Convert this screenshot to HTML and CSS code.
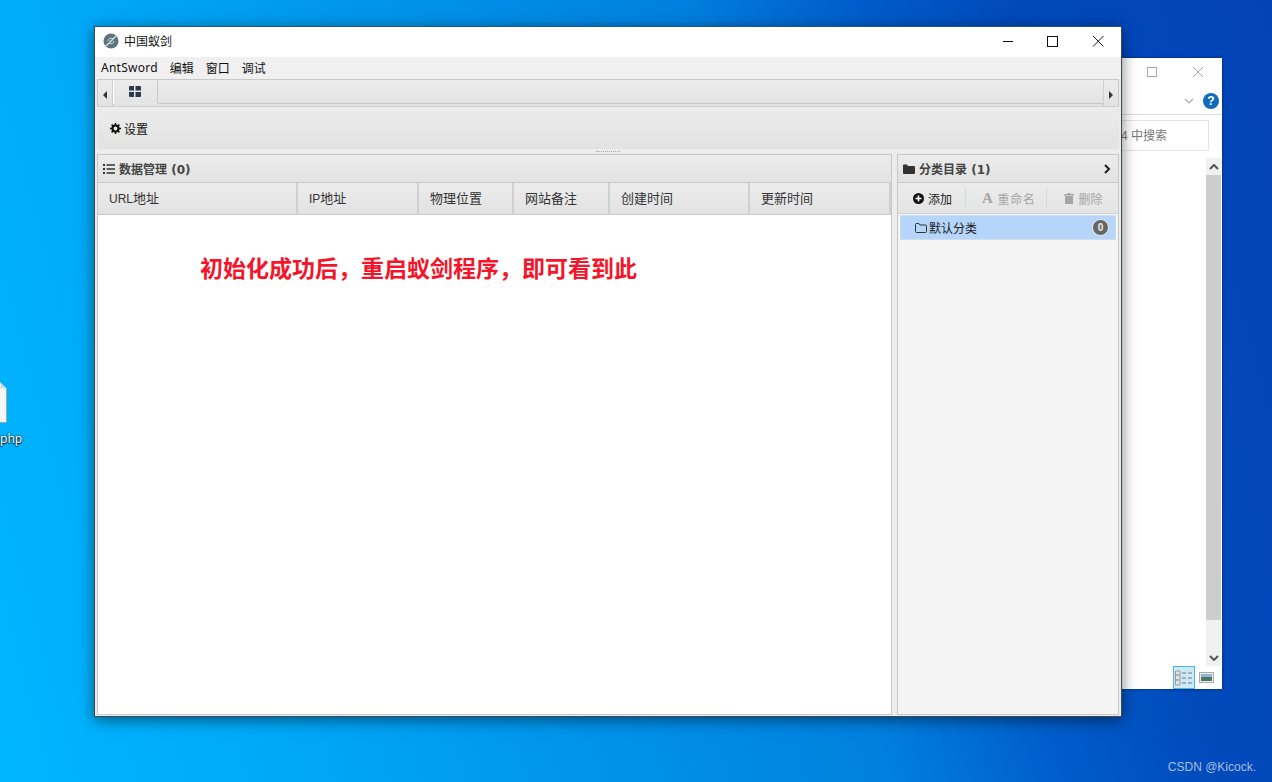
FILE: index.html
```html
<!DOCTYPE html>
<html lang="zh-CN">
<head>
    <meta charset="UTF-8">
    <title>中国蚁剑</title>
    <link rel="stylesheet" href="styles.css">
</head>
<body>
    <div class="desktop">
        <div class="file-icon">
            <svg width="8" height="42" viewBox="0 0 8 42">
                <path d="M-10 .5H.5L6.500 6.500V40.500H-10Z" fill="#f6f6f7" stroke="#9aa6ae"/>
                <path d="M.5 .5V6.500H6.500Z" fill="#d5dadd"/>
            </svg>
        </div>
        <div class="file-name">php</div>

        <!-- window behind -->
        <div class="back-window">
            <div class="back-title">
                <svg width="12" height="12" viewBox="0 0 12 12"><rect x="1.500" y="1.500" width="9" height="9" fill="none" stroke="#a8a8a8"/></svg>
                <svg width="12" height="12" viewBox="0 0 12 12"><path d="M1 1L11 11M11 1L1 11" stroke="#a8a8a8"/></svg>
            </div>
            <div class="back-ribbon">
                <svg width="10" height="6" viewBox="0 0 10 6"><path d="M1 1L5 5L9 1" fill="none" stroke="#a8a8a8" stroke-width="1.200"/></svg>
                <span class="help">?</span>
            </div>
            <div class="back-search-row">
                <div class="back-search">4 中搜索</div>
            </div>
            <div class="back-body">
                <div class="back-content"></div>
                <div class="back-scroll">
                    <div class="scroll-btn">
                        <svg width="10" height="6" viewBox="0 0 10 6"><path d="M1 5L5 1L9 5" fill="none" stroke="#555" stroke-width="2"/></svg>
                    </div>
                    <div class="scroll-thumb"></div>
                    <div class="scroll-btn">
                        <svg width="10" height="6" viewBox="0 0 10 6"><path d="M1 1L5 5L9 1" fill="none" stroke="#555" stroke-width="2"/></svg>
                    </div>
                </div>
            </div>
            <div class="back-status">
                <span class="view-btn active">
                    <svg width="18" height="16" viewBox="0 0 18 16"><path d="M.5 1H5V15H.5Z" fill="#e4e4e4" stroke="#999"/><path d="M1 5H4M1 10H4M7 3H11M13 3H17M7 8H11M13 8H17M7 13H11M13 13H17" stroke="#777"/></svg>
                </span>
                <span class="view-btn">
                    <svg width="15" height="11" viewBox="0 0 15 11"><rect x=".5" y=".5" width="14" height="10" fill="#eee" stroke="#aaa"/><rect x="2" y="2" width="11" height="3" fill="#8fb7d6"/><rect x="2" y="5" width="11" height="4" fill="#4d7466"/></svg>
                </span>
            </div>
        </div>

        <!-- main window -->
        <div class="window">
            <div class="titlebar">
                <div class="app-title">
                    <svg class="app-logo" width="16" height="16" viewBox="0 0 16 16">
                        <circle cx="8" cy="8" r="7.500" fill="#5d7480"/>
                        <path d="M3 13L13 3" stroke="#d5dde0" stroke-width="1.400"/>
                        <path d="M5 8a3 3 0 0 1 5-2M11 8a3 3 0 0 1-5 2" fill="none" stroke="#d5dde0"/>
                    </svg>
                    <span>中国蚁剑</span>
                </div>
                <div class="win-controls">
                    <span class="win-btn"><svg width="12" height="12" viewBox="0 0 12 12"><path d="M1 6.500H11" stroke="#111"/></svg></span>
                    <span class="win-btn"><svg width="12" height="12" viewBox="0 0 12 12"><rect x="1.500" y="1.500" width="10" height="10" fill="none" stroke="#111"/></svg></span>
                    <span class="win-btn"><svg width="12" height="12" viewBox="0 0 12 12"><path d="M1 1L11.500 11.500M11.500 1L1 11.500" stroke="#111"/></svg></span>
                </div>
            </div>

            <div class="menubar">
                <span>AntSword</span>
                <span>编辑</span>
                <span>窗口</span>
                <span>调试</span>
            </div>

            <div class="content">
                <div class="tabbar">
                    <div class="tab-arrow">
                        <svg width="4" height="8" viewBox="0 0 4 8"><path d="M4 0V8L0 4Z" fill="#333"/></svg>
                    </div>
                    <div class="tab-active">
                        <svg width="12" height="11" viewBox="0 0 12 11"><path d="M0 1Q0 0 1 0H5V4.500H0ZM6.500 0H11Q12 0 12 1V4.500H6.500ZM0 6H5V11H1Q0 11 0 10ZM6.500 6H12V10Q12 11 11 11H6.500Z" fill="#2b3a4a"/></svg>
                    </div>
                    <div class="tab-rest"></div>
                    <div class="tab-arrow right">
                        <svg width="4" height="8" viewBox="0 0 4 8"><path d="M0 0V8L4 4Z" fill="#333"/></svg>
                    </div>
                </div>

                <div class="toolbar">
                    <span class="tool-item">
                        <svg width="11" height="11" viewBox="0 0 11 11"><circle cx="5.500" cy="5.500" r="3" fill="none" stroke="#111" stroke-width="2.200"/><path d="M5.500 0V2M5.500 9V11M0 5.500H2M9 5.500H11M1.600 1.600L3 3M8 8L9.400 9.400M9.400 1.600L8 3M3 8L1.600 9.400" stroke="#111" stroke-width="1.600"/></svg>
                        设置
                    </span>
                </div>

                <div class="splitter"><i></i></div>

                <div class="panels">
                    <section class="panel panel-left">
                        <header class="panel-head">
                            <svg width="12" height="10" viewBox="0 0 12 10"><path d="M0 0H2V2H0ZM0 4H2V6H0ZM0 8H2V10H0ZM3.500 .3H12V1.700H3.500ZM3.500 4.300H12V5.700H3.500ZM3.500 8.300H12V9.700H3.500Z" fill="#333"/></svg>
                            <span>数据管理 (0)</span>
                        </header>
                        <div class="grid-head">
                            <div class="col col-url"><span class="latin">URL</span>地址</div>
                            <div class="col col-ip"><span class="latin">IP</span>地址</div>
                            <div class="col col-loc">物理位置</div>
                            <div class="col col-note">网站备注</div>
                            <div class="col col-created">创建时间</div>
                            <div class="col col-updated">更新时间</div>
                        </div>
                        <div class="grid-body">
                            <p class="notice">初始化成功后，重启蚁剑程序，即可看到此</p>
                        </div>
                    </section>

                    <section class="panel panel-right">
                        <header class="panel-head">
                            <svg width="12" height="10" viewBox="0 0 12 10"><path d="M0 1.500Q0 .5 1 .5H4L5 2H11Q12 2 12 3V9Q12 10 11 10H1Q0 10 0 9Z" fill="#333"/></svg>
                            <span>分类目录 (1)</span>
                            <svg class="collapse" width="7" height="10" viewBox="0 0 7 10"><path d="M1 1L5 5L1 9" fill="none" stroke="#222" stroke-width="2"/></svg>
                        </header>
                        <div class="cat-tools">
                            <span class="cat-btn">
                                <svg width="11" height="11" viewBox="0 0 11 11"><circle cx="5.500" cy="5.500" r="5.500" fill="#111"/><path d="M5.500 2.500V8.500M2.500 5.500H8.500" stroke="#fff" stroke-width="1.600"/></svg>
                                添加
                            </span>
                            <span class="cat-btn off rename">
                                <span class="glyph-a">A</span>
                                重命名
                            </span>
                            <span class="cat-btn off del">
                                <svg width="10" height="11" viewBox="0 0 10 11"><path d="M3.500 0H6.500V1H10V2.500H0V1H3.500ZM1 3H9V11H1Z" fill="#a5a5a5"/></svg>
                                删除
                            </span>
                        </div>
                        <div class="cat-list">
                            <div class="cat-row">
                                <svg width="12" height="10" viewBox="0 0 12 10"><path d="M.5 1.500Q.5 .5 1.500 .5H4L5 2H10.500Q11.500 2 11.500 3V8.500Q11.500 9.500 10.500 9.500H1.500Q.5 9.500 .5 8.500Z" fill="none" stroke="#333"/></svg>
                                <span>默认分类</span>
                                <b class="badge">0</b>
                            </div>
                        </div>
                    </section>
                </div>
            </div>
        </div>

        <div class="watermark">CSDN @Kicock.</div>
    </div>
</body>
</html>
```

FILE: styles.css
```css
* {
    box-sizing: border-box;
}

html, body {
    margin: 0;
    height: 100%;
    overflow: hidden;
}

body {
    font-family: "Liberation Sans", "Noto Sans CJK SC", sans-serif;
    font-size: 12px;
    color: #222;
}

.desktop {
    position: relative;
    width: 1272px;
    height: 782px;
    overflow: hidden;
    background: linear-gradient(75deg, #00b6ff 0%, #00a8f8 20%, #0094ea 40%, #0080e0 60%, #005cca 72%, #004abc 82%, #0542b8 100%);
}

.file-icon {
    position: absolute;
    left: 0;
    top: 382px;
    line-height: 0;
}

.file-name {
    position: absolute;
    left: 0;
    top: 430px;
    font-family: "Noto Sans", sans-serif;
    font-size: 12px;
    color: #fff;
    text-shadow: 0 1px 1px #000, 0 0 2px #000;
}

.watermark {
    position: absolute;
    right: 16px;
    top: 760px;
    font-size: 12px;
    color: #a9bddc;
}

/* back window */
.back-window {
    position: absolute;
    left: 1100px;
    top: 58px;
    width: 122px;
    height: 631px;
    display: flex;
    flex-direction: column;
    background: #fff;
    box-shadow: 0 0 3px rgba(0, 0, 0, 0.5);
}

.back-title {
    height: 28px;
    display: flex;
    align-items: center;
    justify-content: flex-end;
    gap: 34px;
    padding: 0 18px 0 0;
    flex: none;
}

.back-ribbon {
    height: 29px;
    display: flex;
    align-items: center;
    justify-content: flex-end;
    gap: 9px;
    padding: 1px 3px 0 0;
    border-bottom: 1px solid #dcdcdc;
    flex: none;
}

.help {
    width: 16px;
    height: 16px;
    border-radius: 50%;
    background: #0f6cbd;
    color: #fff;
    font-weight: bold;
    font-size: 12px;
    line-height: 16px;
    text-align: center;
}

.back-search-row {
    height: 36px;
    padding: 5px 13px 0 17px;
    flex: none;
}

.back-search {
    height: 31px;
    border: 1px solid #e3e3e3;
    padding-left: 3px;
    line-height: 30px;
    color: #777;
    font-size: 12px;
}

.back-body {
    flex: 1;
    display: flex;
    padding-top: 7px;
    min-height: 0;
}

.back-content {
    flex: 1;
}

.back-scroll {
    width: 15px;
    margin-right: 1px;
    display: flex;
    flex-direction: column;
    background: #f0f0f0;
}

.scroll-btn {
    height: 17px;
    display: flex;
    align-items: center;
    justify-content: center;
    flex: none;
}

.scroll-thumb {
    height: 445px;
    background: #cdcdcd;
}

.back-scroll .scroll-btn:last-child {
    margin-top: auto;
}

.back-status {
    height: 23px;
    flex: none;
    display: flex;
    justify-content: flex-end;
    align-items: center;
    gap: 3px;
    padding-right: 8px;
}

.view-btn {
    width: 22px;
    height: 23px;
    display: flex;
    align-items: center;
    justify-content: center;
}

.view-btn.active {
    background: #cde8f7;
    border: 1px solid #4fb3e5;
}

.view-btn:last-child {
    width: 16px;
}

/* main window */
.window {
    position: absolute;
    left: 94px;
    top: 26px;
    width: 1028px;
    height: 691px;
    display: flex;
    flex-direction: column;
    background: #f0f0f0;
    border: 1px solid #3c4a56;
    border-top-color: #1f5a7a;
    box-shadow: 0 3px 14px rgba(0, 0, 0, 0.5);
}

.titlebar {
    height: 30px;
    flex: none;
    display: flex;
    align-items: center;
    justify-content: space-between;
    background: #fff;
}

.app-title {
    display: flex;
    align-items: center;
    gap: 5px;
    padding: 0 0 3px 8px;
    color: #111;
}

.win-controls {
    display: flex;
}

.win-btn {
    width: 46px;
    height: 30px;
    display: flex;
    align-items: center;
    justify-content: center;
    padding-bottom: 2px;
}

.win-btn:first-child {
    padding-left: 4px;
}

.menubar {
    height: 22px;
    flex: none;
    display: flex;
    align-items: center;
    gap: 12px;
    padding: 0 0 2px 6px;
    background: #f0f0f0;
    color: #111;
}

.menubar span:first-child {
    font-family: "Noto Sans", sans-serif;
    font-size: 12px;
    letter-spacing: .25px;
}

.content {
    flex: 1;
    min-height: 0;
    display: flex;
    flex-direction: column;
    padding: 0 2px 1px;
    background: #ececec;
}

.tabbar {
    height: 28px;
    flex: none;
    display: flex;
    border: 1px solid #c8c8c8;
    border-bottom: 1px solid #cfcfcf;
    background: linear-gradient(#ececec, #e2e2e2);
}

.tab-arrow {
    width: 15px;
    flex: none;
    display: flex;
    align-items: center;
    justify-content: center;
    border-right: 1px solid #cfcfcf;
    padding-top: 3px;
}

.tab-arrow.right {
    border-right: 0;
    border-left: 1px solid #cfcfcf;
}

.tab-active {
    width: 45px;
    height: 24px;
    flex: none;
    display: flex;
    align-items: center;
    justify-content: center;
    border-right: 1px solid #c8c8c8;
    border-left: 1px solid #fff;
    border-bottom: 1px solid #e8e8e8;
    padding-right: 2px;
}

.tab-rest {
    flex: 1;
    border-bottom: 1px solid #c8c8c8;
    height: 24px;
}

.toolbar {
    height: 42px;
    flex: none;
    display: flex;
    align-items: center;
    padding-left: 13px;
    background: linear-gradient(#ececec, #e2e2e2);
}

.tool-item {
    display: flex;
    align-items: center;
    gap: 3px;
    color: #111;
}

.splitter {
    height: 5px;
    flex: none;
    display: flex;
    justify-content: center;
    padding-top: 2px;
}

.splitter i {
    width: 24px;
    height: 1px;
    border-top: 1px dotted #aaa;
}

.panels {
    flex: 1;
    min-height: 0;
    display: flex;
    gap: 5px;
}

.panel {
    display: flex;
    flex-direction: column;
    border: 1px solid #c8c8c8;
    background: #f4f4f4;
}

.panel-left {
    width: 795px;
    flex: none;
}

.panel-right {
    flex: 1;
    min-width: 0;
}

.panel-head {
    height: 28px;
    flex: none;
    display: flex;
    align-items: center;
    gap: 4px;
    padding-left: 5px;
    border-bottom: 1px solid #c8c8c8;
    background: linear-gradient(#ececec, #e2e2e2);
    font-family: "DejaVu Sans", "Noto Sans CJK SC", sans-serif;
    font-weight: bold;
    color: #444;
}

.collapse {
    margin-left: auto;
    margin-right: 7px;
}

.grid-head {
    height: 32px;
    flex: none;
    display: flex;
    border-bottom: 1px solid #c8c8c8;
    background: linear-gradient(#ececec, #e2e2e2);
    color: #333;
}

.col {
    padding: 1px 0 0 11px;
    line-height: 30px;
    font-size: 13px;
    border-right: 2px solid #d0d0d0;
}

.latin {
    font-size: 12px;
}

.col-url { width: 200px; }
.col-ip { width: 121px; }
.col-loc { width: 95px; }
.col-note { width: 96px; }
.col-created { width: 140px; }
.col-updated { width: 141px; }

.grid-body {
    flex: 1;
    min-height: 0;
    background: #fff;
    padding: 41px 0 0 102px;
}

.notice {
    margin: 0;
    font-size: 23px;
    line-height: 26px;
    font-weight: bold;
    color: #f5152a;
}

.cat-tools {
    height: 31px;
    flex: none;
    display: flex;
    align-items: center;
    padding-left: 15px;
    border-bottom: 1px solid #d0d0d0;
    background: linear-gradient(#ececec, #e4e4e4);
    color: #222;
}

.cat-btn {
    display: flex;
    align-items: center;
    gap: 4px;
}

.cat-btn.off {
    color: #a5a5a5;
    border-left: 1px solid #d0dadd;
    height: 20px;
}

.rename {
    margin-left: 13px;
    padding-left: 16px;
    letter-spacing: .65px;
}

.del {
    margin-left: 11px;
    padding-left: 17px;
}

.glyph-a {
    font-family: "Liberation Serif", serif;
    font-weight: bold;
    font-size: 15px;
    color: #a5a5a5;
}

.cat-list {
    flex: 1;
    padding: 1px 2px;
}

.cat-row {
    height: 25px;
    display: flex;
    align-items: center;
    gap: 2px;
    padding: 0 6px 0 14px;
    background: #b5d5fb;
    border: 1px solid #cfdeee;
    color: #222;
}

.badge {
    width: 17px;
    height: 17px;
    margin-left: auto;
    border-radius: 50%;
    background: #666;
    border: 1px solid #f0f0f0;
    color: #eee;
    font-size: 10px;
    line-height: 15px;
    text-align: center;
}
```
